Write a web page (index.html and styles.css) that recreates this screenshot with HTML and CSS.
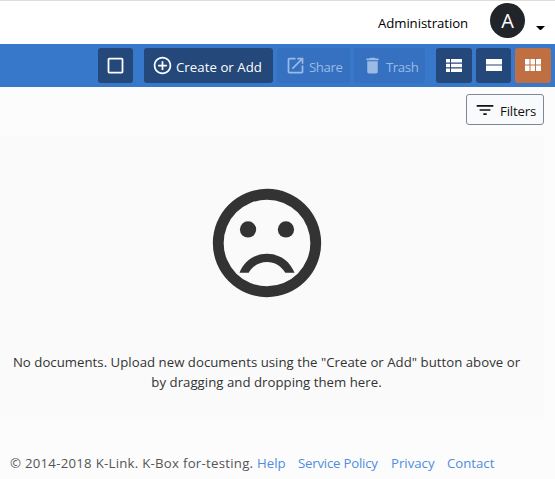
FILE: index.html
```html
<!DOCTYPE html>
<html lang="en">
<head>
<meta charset="utf-8">
<title>K-Box</title>
<link rel="stylesheet" href="styles.css">
</head>
<body>
<header class="header">
  <a class="admin"><span>Administration</span></a>
  <span class="avatar">A</span>
  <span class="caret"></span>
</header>
<nav class="toolbar">
  <button class="btn select"><svg class="icon" viewBox="0 0 24 24"><path d="M19 5v14H5V5h14m0-2H5c-1.100 0-2 .9-2 2v14c0 1.100.9 2 2 2h14c1.100 0 2-.9 2-2V5c0-1.100-.9-2-2-2z"/></svg></button>
  <button class="btn create"><svg class="icon" viewBox="0 0 24 24"><path d="M13 7h-2v4H7v2h4v4h2v-4h4v-2h-4V7zm-1-5C6.480 2 2 6.480 2 12s4.480 10 10 10 10-4.480 10-10S17.520 2 12 2zm0 18c-4.410 0-8-3.590-8-8s3.590-8 8-8 8 3.590 8 8-3.590 8-8 8z"/></svg><span class="label">Create or Add</span></button>
  <button class="btn share disabled"><svg class="icon" viewBox="0 0 24 24"><path d="M19 19H5V5h7V3H5c-1.110 0-2 .9-2 2v14c0 1.100.89 2 2 2h14c1.100 0 2-.9 2-2v-7h-2v7zM14 3v2h3.590l-9.830 9.830 1.410 1.410L19 6.410V10h2V3h-7z"/></svg><span class="label">Share</span></button>
  <button class="btn trash disabled"><svg class="icon" viewBox="0 0 24 24"><path d="M6 19c0 1.100.9 2 2 2h8c1.100 0 2-.9 2-2V7H6v12zM19 4h-3.500l-1-1h-5l-1 1H5v2h14V4z"/></svg><span class="label">Trash</span></button>
  <div class="views">
    <button class="btn list"><svg class="view-icon" viewBox="0 0 16 13"><path d="M0 0h4v3.500H0zM5 0h11v3.500H5zM0 4.700h4v3.500H0zM5 4.700h11v3.500H5zM0 9.400h4V13H0zM5 9.400h11V13H5z"/></svg></button>
    <button class="btn rows"><svg class="view-icon" viewBox="0 0 16 13"><path d="M0 0h16v5.500H0zM0 6.500h16V12H0z"/></svg></button>
    <button class="btn tiles active"><svg class="view-icon" viewBox="0 0 16 13"><path d="M0 0h4.500v5.500H0zM5.500 0H10v5.500H5.500zM11 0h5v5.500h-5zM0 6.500h4.500V12H0zM5.500 6.500H10V12H5.500zM11 6.500h5V12h-5z"/></svg></button>
  </div>
</nav>
<div class="filter-bar">
  <button class="filters"><svg class="icon" viewBox="0 0 24 24"><path d="M10 18h4v-2h-4v2zM2 6v2h20V6H2zm3.500 7h13v-2h-13v2z"/></svg><span class="label">Filters</span></button>
</div>
<main class="empty">
  <svg class="face" viewBox="0 0 24 24"><circle cx="8.500" cy="9.500" r="1.500"/><circle cx="15.500" cy="9.500" r="1.500"/><path d="M12 2a10 10 0 1 0 0 20 10 10 0 1 0 0-20zm0 18a8 8 0 1 1 0-16 8 8 0 0 1 0 16z"/><path d="M12 14c-2.330 0-4.200 1.300-5.080 3.500h1.700C9.400 16.200 10.600 15.500 12 15.500s2.600.7 3.380 2h1.700C16.200 15.300 14.330 14 12 14z"/></svg>
  <p class="message">No documents. Upload new documents using the "Create or Add" button above or<br>by dragging and dropping them here.</p>
</main>
<footer class="footer">
  <span class="copy">© 2014-2018 K-Link. K-Box for-testing.</span>
  <a class="help">Help</a>
  <a class="policy">Service Policy</a>
  <a class="privacy">Privacy</a>
  <a class="contact">Contact</a>
</footer>
</body>
</html>
```
FILE: styles.css
```css
* { box-sizing: border-box; }
body {
  margin: 0;
  background: #fcfcfc;
  color: #333;
  font: 13.2px/20px "Open Sans", "Noto Sans", sans-serif;
}
svg { display: block; fill: currentColor; flex: none; }
button { font: inherit; color: inherit; }
.header {
  height: 44px;
  display: flex;
  justify-content: flex-end;
  padding-right: 10px;
  background: #fff;
  border-top: 1px solid #ddd;
  color: #000;
}
.admin {
  width: 90px;
  margin: 12px 22px 0 0;
  letter-spacing: -0.08px;
  white-space: nowrap;
}
.avatar {
  width: 35px;
  height: 35px;
  margin: 2px 11px 0 0;
  border-radius: 50%;
  background: #212529;
  color: #fff;
  font-size: 20px;
  line-height: 35px;
  text-align: center;
}
.caret {
  width: 9px;
  height: 4px;
  margin-top: 25px;
  border: solid transparent;
  border-width: 4px 4.5px 0;
  border-top-color: #000;
}
.toolbar {
  height: 43px;
  padding: 4px 4px 0 0;
  display: flex;
  justify-content: flex-end;
  gap: 4px;
  background: #3878cb;
}
.btn {
  height: 35px;
  padding: 0 0 0 8px;
  display: flex;
  align-items: center;
  border: 0;
  border-radius: 3px;
  background: #24487a;
  color: #fff;
  white-space: nowrap;
}
.icon { width: 20px; height: 20px; }
.btn .icon { width: 21px; height: 21px; margin-bottom: 1px; }
.btn .label { margin: 3px 0 0 3px; }
.select { width: 35px; padding-left: 7px; margin-right: 7px; }
.create { width: 129px; letter-spacing: 0.06px; }
.share { width: 73px; letter-spacing: -0.4px; }
.trash { width: 71px; letter-spacing: -0.4px; }
.disabled { background: #3571c0; color: #9bbbe4; }
.views { display: flex; gap: 4px; margin-left: 7px; }
.views .btn { width: 36px; padding: 0 0 1px 10px; }
.views .rows { width: 35px; }
.views .active { background: #c06f42; }
.view-icon { width: 16px; height: 13px; }
.filter-bar {
  height: 49px;
  padding: 7px 11px 0 0;
  display: flex;
  justify-content: flex-end;
}
.filters {
  width: 78px;
  height: 31px;
  padding: 0 0 0 8px;
  display: flex;
  align-items: center;
  border: 1px solid #7d8894;
  border-radius: 3px;
  background: #f8fafc;
  color: #111;
  letter-spacing: -0.15px;
}
.filters .label { margin: 3px 0 0 5px; }
.empty {
  height: 283px;
  margin-right: 11px;
  padding: 42px 0 0;
  background: #fafafa;
}
.face { width: 130px; height: 130px; margin-left: 202px; }
.message {
  width: 533px;
  margin: 44px 0 0;
  letter-spacing: 0.03px;
  text-align: center;
  white-space: nowrap;
}
.footer {
  display: flex;
  margin: 34px 0 0 10px;
  color: #555;
  white-space: nowrap;
}
.footer a { color: #4f8de0; }
.copy { width: 247px; letter-spacing: 0.27px; }
.help { width: 41px; }
.footer .policy { width: 93px; letter-spacing: -0.2px; }
.privacy { width: 56px; }
```
